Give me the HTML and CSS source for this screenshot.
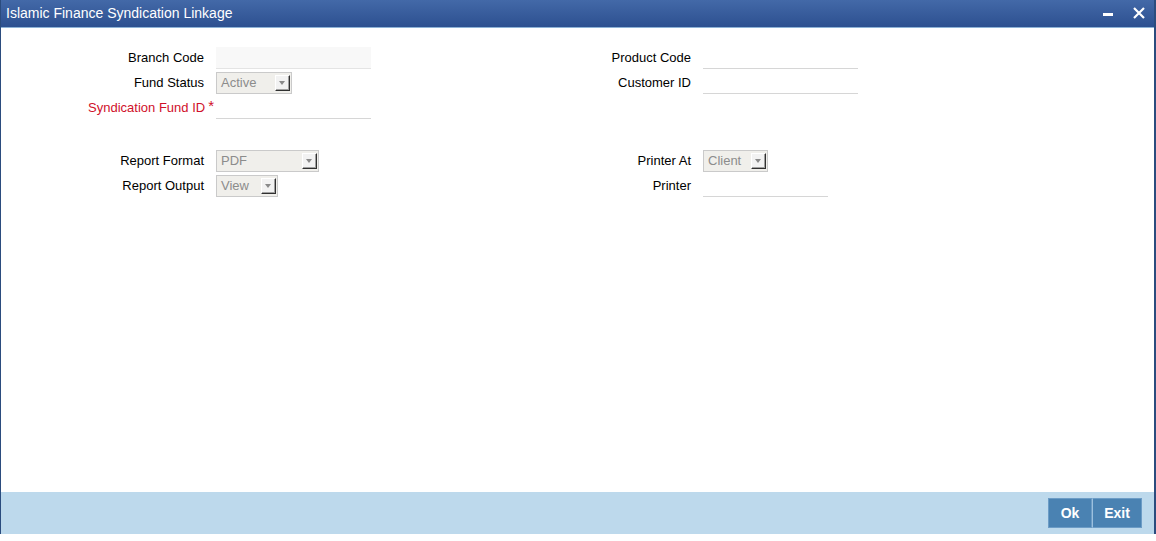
FILE: index.html
```html
<!DOCTYPE html>
<html>
<head>
  <title>Islamic Finance Syndication Linkage</title>
  <link rel="stylesheet" href="styles.css">
</head>
<body>
  <div class="window">
    <div class="titlebar">
      <span class="title">Islamic Finance Syndication Linkage</span>
      <div class="window-controls">
        <span class="minimize"></span>
        <svg class="close" width="12" height="12" viewBox="0 0 12 12">
          <path d="M1 1 L11 11 M11 1 L1 11" stroke="#fff" stroke-width="2.2" fill="none"/>
        </svg>
      </div>
    </div>

    <div class="content">
      <div class="form-grid">
        <label class="field-label">Branch Code</label>
        <div class="field"><input class="text-input disabled" type="text" readonly></div>
        <label class="field-label">Product Code</label>
        <div class="field"><input class="text-input" type="text"></div>

        <label class="field-label">Fund Status</label>
        <div class="field">
          <div class="select" style="width: 76px"><span class="select-value">Active</span><span class="select-arrow"></span></div>
        </div>
        <label class="field-label">Customer ID</label>
        <div class="field"><input class="text-input" type="text"></div>

        <label class="field-label required">Syndication Fund ID<span class="star">*</span></label>
        <div class="field"><input class="text-input" type="text"></div>
        <div></div>
        <div></div>
      </div>

      <div class="form-grid report-grid">
        <label class="field-label">Report Format</label>
        <div class="field">
          <div class="select" style="width: 103px"><span class="select-value">PDF</span><span class="select-arrow"></span></div>
        </div>
        <label class="field-label">Printer At</label>
        <div class="field">
          <div class="select" style="width: 65px"><span class="select-value">Client</span><span class="select-arrow"></span></div>
        </div>

        <label class="field-label">Report Output</label>
        <div class="field">
          <div class="select" style="width: 62px"><span class="select-value">View</span><span class="select-arrow"></span></div>
        </div>
        <label class="field-label">Printer</label>
        <div class="field"><input class="text-input short" type="text"></div>
      </div>
    </div>

    <div class="footer">
      <button class="footer-button ok">Ok</button>
      <button class="footer-button">Exit</button>
    </div>
  </div>
</body>
</html>
```

FILE: styles.css
```css
html, body {
  margin: 0;
  padding: 0;
  background-color: #FFF;
}

body {
  height: 541px;
  font-family: "Liberation Sans", Arial, sans-serif;
  font-size: 13px;
  color: #000;
}

.window {
  height: 534px;
  display: flex;
  flex-direction: column;
  border-left: 1px solid #2B4C7E;
  border-right: 2px solid #2B4C7E;
  box-sizing: border-box;
}

.titlebar {
  height: 28px;
  display: flex;
  align-items: center;
  justify-content: space-between;
  padding-left: 5px;
  padding-right: 9px;
  background: linear-gradient(#4369A8, #2D5090);
  border-bottom: 1px solid #8DB2D6;
  box-sizing: border-box;
}

.title {
  color: #FFF;
  font-size: 14px;
  margin-top: -2px;
}

.window-controls {
  display: flex;
  align-items: center;
  gap: 20px;
  margin-top: -1px;
}

.minimize {
  display: block;
  width: 10px;
  height: 3px;
  background-color: #FFF;
  margin-top: 2px;
}

.content {
  flex: 1;
  padding-top: 17px;
}

.form-grid {
  display: grid;
  grid-template-columns: 203px 272px 191px 200px;
  grid-auto-rows: 25px;
  column-gap: 12px;
}

.report-grid {
  margin-top: 28px;
}

.field-label {
  display: flex;
  align-items: center;
  justify-content: flex-end;
  white-space: nowrap;
}

.field-label.required {
  color: #D0102A;
}

.star {
  margin-left: 3px;
  margin-right: -10px;
  font-size: 15px;
  margin-top: -4px;
}

.field {
  display: flex;
  align-items: center;
}

.text-input {
  width: 155px;
  height: 22px;
  border: none;
  border-bottom: 1px solid #D6D6D6;
  background-color: #FFF;
  box-sizing: border-box;
  padding: 0 4px;
  font-family: inherit;
  font-size: 13px;
  outline: none;
}

.text-input.disabled {
  background-color: #F8F8F8;
  border-bottom-color: #E4E4E4;
}

.text-input.short {
  width: 125px;
}

.select {
  position: relative;
  height: 22px;
  border: 1px solid #CACACA;
  background-color: #F0EFEB;
  box-sizing: border-box;
  display: flex;
  align-items: center;
}

.select-value {
  color: #8C8C8C;
  padding-left: 4px;
}

.select-arrow {
  position: absolute;
  right: 1px;
  top: 2px;
  width: 15px;
  height: 16px;
  background-color: #F2F2F2;
  border-top: 1px solid #FFF;
  border-left: 1px solid #FFF;
  border-right: 1px solid #303030;
  border-bottom: 1px solid #303030;
  box-sizing: border-box;
  box-shadow: inset -1px -1px 0 #A0A0A0;
}

.select-arrow::after {
  content: "";
  position: absolute;
  left: 3px;
  top: 5px;
  border-left: 3.5px solid transparent;
  border-right: 3.5px solid transparent;
  border-top: 4px solid #8A8A8A;
}

.footer {
  height: 42px;
  background-color: #BDD9EC;
  display: flex;
  justify-content: flex-end;
  align-items: flex-start;
  padding-top: 6px;
  padding-right: 12px;
  box-sizing: border-box;
}

.footer-button {
  height: 30px;
  padding: 0;
  width: 44px;
  border: 1px solid #6C9CC6;
  background-color: #4A82B2;
  color: #FFF;
  font-family: inherit;
  font-size: 14px;
  font-weight: bold;
  cursor: pointer;
}

.footer-button.ok {
  width: 44px;
}

.footer-button + .footer-button {
  width: 50px;
  border-left-color: #9CC0DE;
}
```
